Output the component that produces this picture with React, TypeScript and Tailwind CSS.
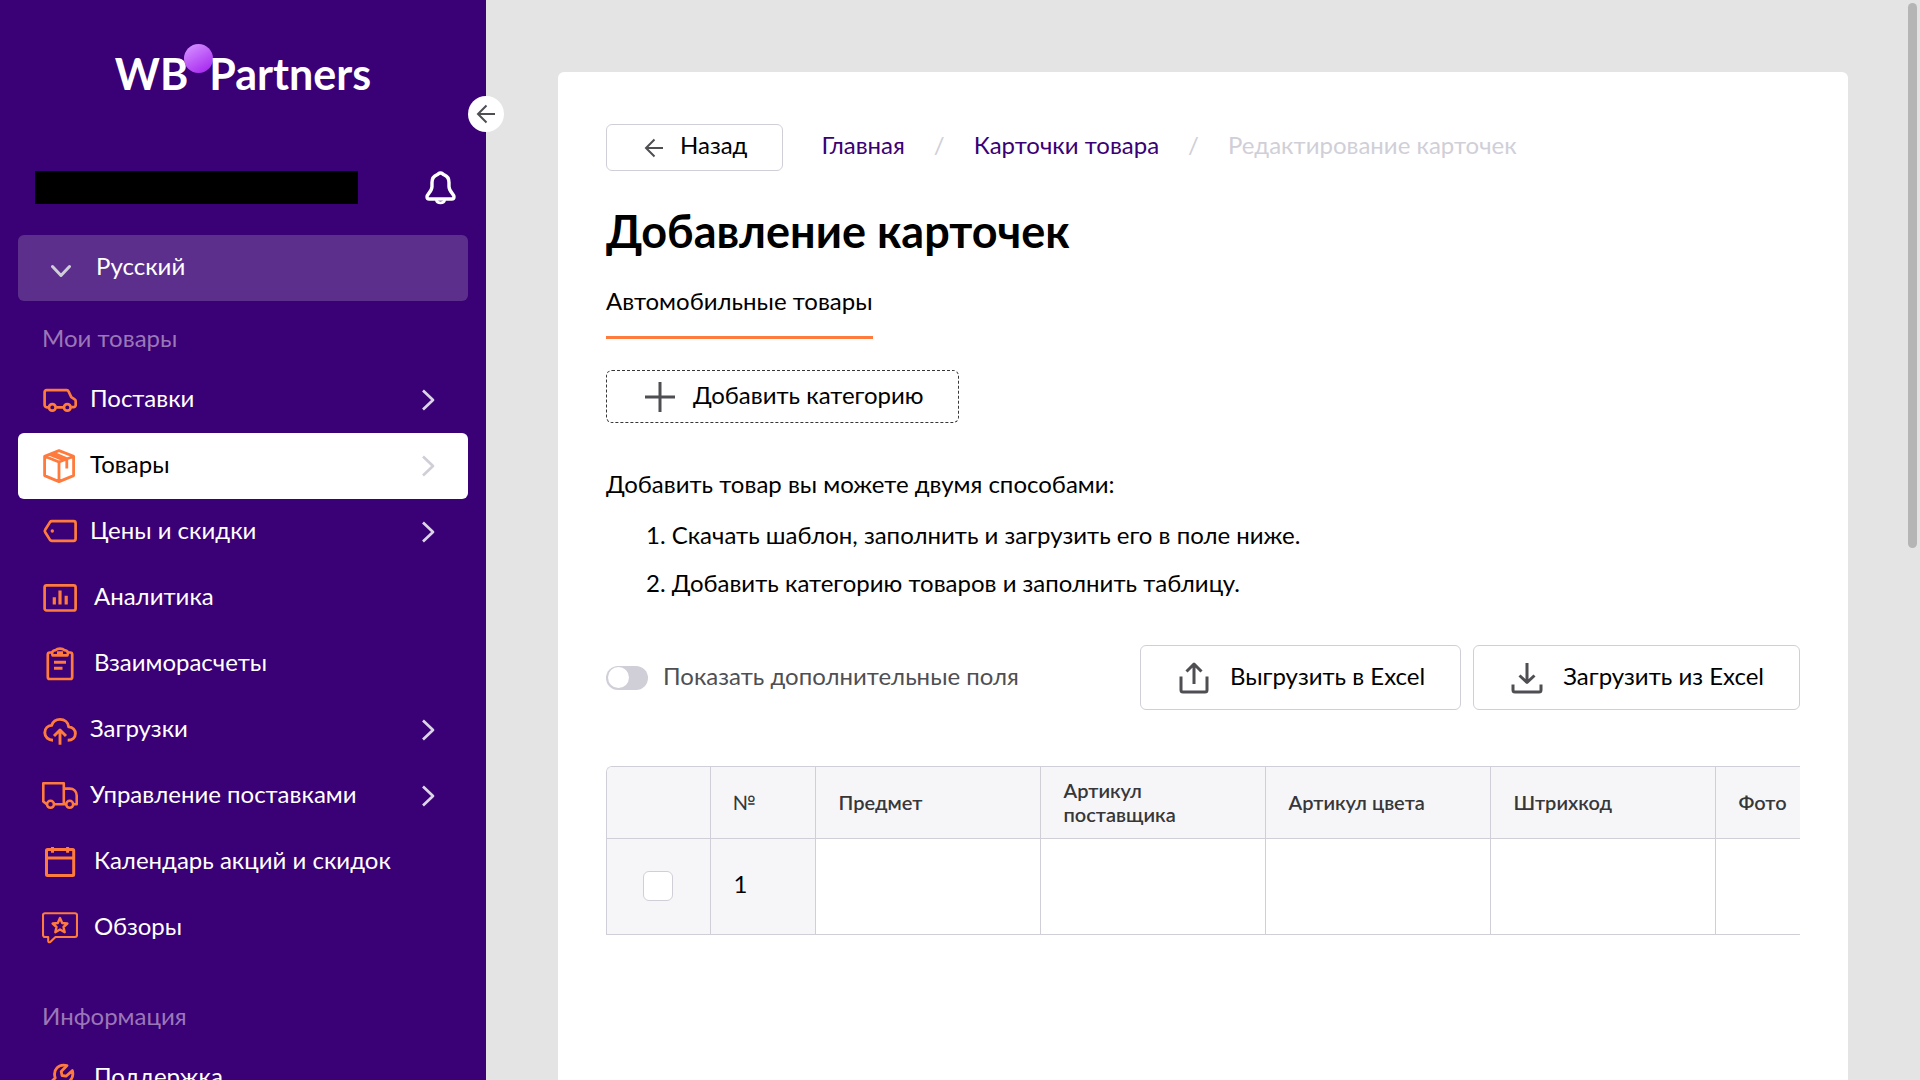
import { useState } from "react";
import type { ReactNode } from "react";

interface IconProps {
  children: ReactNode;
  width?: number;
  size?: number;
  className?: string;
}

function Icon({ children, width = 2, size = 36, className = "text-[#ff7a3d]" }: IconProps) {
  return (
    <svg
      width={size}
      height={size}
      viewBox={`0 0 ${size} ${size}`}
      fill="none"
      stroke="currentColor"
      strokeWidth={width}
      strokeLinejoin="round"
      aria-hidden="true"
      className={`shrink-0 ${className}`}
    >
      {children}
    </svg>
  );
}

const VanIcon = () => (
  <Icon width={2.7}>
    <path d="M6.5 25.3H4.8a2.2 2.2 0 0 1-2.2-2.2V10.2A2 2 0 0 1 4.6 8.2H24.6a2.2 2.2 0 0 1 2 1.3L29.3 15.2L32.7 17.3a2 2 0 0 1 1 1.8V23a2.2 2.2 0 0 1-2.2 2.2H29.2M14.2 25.3H21.5" />
    <circle cx="10.3" cy="25.4" r="3.3" />
    <circle cx="25.3" cy="25.4" r="3.3" />
  </Icon>
);

const BoxIcon = () => (
  <Icon width={2.8}>
    <path d="M17 2.6L31.6 8.2V27.6L17 33.6L2.6 27.6V8.2ZM2.6 8.2L17 14L31.6 8.2M17 14V33.6M7.5 6.4L21.8 12L25 10.8L12 5.2M24.8 11V20.6" />
  </Icon>
);

const TagIcon = () => (
  <Icon width={2.7}>
    <path d="M9.8 7.2H31.6a2 2 0 0 1 2 2V24.8a2 2 0 0 1-2 2H9.8a2.2 2.2 0 0 1-1.8-.9L3.2 18.3a2.2 2.2 0 0 1 0-2.6L8 8.1A2.2 2.2 0 0 1 9.8 7.2Z" />
    <circle cx="10.3" cy="17" r="1.7" fill="currentColor" stroke="none" />
  </Icon>
);

const ChartIcon = () => (
  <Icon width={2.7}>
    <rect x="2.6" y="5.3" width="31" height="25.2" rx="2" />
    <path d="M12.3 17.3V24.6M18 10.5V24.6M24.2 15.8V24.6" strokeWidth="3.2" />
  </Icon>
);

const ClipboardIcon = () => (
  <Icon width={2.7}>
    <path d="M10.5 6.5H7.8a2 2 0 0 0-2 2V31a2 2 0 0 0 2 2H28.2a2 2 0 0 0 2-2V8.5a2 2 0 0 0-2-2H25.5" />
    <path d="M10.6 9.3C9 6 11 4.500 13.500 4.200C15.500 2.200 20.500 2.200 22.500 4.200C25 4.500 27 6 25.400 9.300ZM15 6.600H21" />
    <path d="M12 16.300H24M12 22.300H20.500" strokeWidth="3" />
  </Icon>
);

const CloudIcon = () => (
  <Icon width={2.9}>
    <path d="M11 28.300C6.500 28.300 2.800 25.200 2.800 20.800C2.800 16.500 6 13.800 9.600 13.400C11 9.500 14.200 7.400 18 7.400C22.800 7.400 26.200 10.500 26.700 14.800C30.800 15.300 33.400 18 33.400 21.600C33.400 25.400 30.500 28.300 25.700 28.300M18 32.700V18.600M12 24L18 18L24 24" />
  </Icon>
);

const TruckIcon = () => (
  <Icon width={2.6}>
    <path d="M4.800 26.200L1.300 23.500V5.200H21.800V26.200H12.300M21.800 10.600H27.500C32 10.600 34.700 13.500 34.700 17.500V26.200H31.300M21.800 26.200H23.800" />
    <circle cx="8.500" cy="26.300" r="3.500" />
    <circle cx="27.700" cy="26.300" r="3.500" />
  </Icon>
);

const CalendarIcon = () => (
  <Icon width={3}>
    <rect x="4.500" y="5.500" width="27.200" height="26" rx="1" />
    <path d="M4.500 14H31.700" />
    <path d="M10.500 3V8.800M25.600 3V8.800" />
  </Icon>
);

const ReviewIcon = () => (
  <Icon width={2.1}>
    <path d="M3 3.200H33a2 2 0 0 1 2 2V25a2 2 0 0 1-2 2H13.500L8.500 31.800Q6.500 33 6.200 31V27H3a2 2 0 0 1-2-2V5.200A2 2 0 0 1 3 3.200Z" />
    <path d="M18 8L20.200 13L25.400 13.500L21.500 17L22.700 22.200L18 19.500L13.300 22.200L14.500 17L10.600 13.500L15.800 13Z" strokeWidth="2.400" />
  </Icon>
);

const WrenchIcon = () => (
  <Icon width={2.8}>
    <path d="M7 24L13.200 18C10.500 9.500 17 3.500 25 5.600L19.200 11.400L20 15.500L24 16.200L30.400 10.600C32.500 18.500 26.500 24.800 18.500 23L9.500 33Z" />
  </Icon>
);

const ChevronRight = ({ active }: { active?: boolean }) => (
  <Icon size={24} width={2.7} className={active ? "text-[#d0cfd8]" : "text-[#dcd5e6]"}>
    <path d="M7 2.500L17 12L7 21.500" />
  </Icon>
);

const ArrowLeft = () => (
  <Icon size={20} width={2} className="text-[#4f4f53]">
    <path d="M19 10H2M10.500 1.500L2 10L10.500 18.500" strokeLinejoin="miter" />
  </Icon>
);

interface NavItem {
  label: string;
  icon: ReactNode;
  submenu?: boolean;
  active?: boolean;
}

const goods: NavItem[] = [
  { label: "Поставки", icon: <VanIcon />, submenu: true },
  { label: "Товары", icon: <BoxIcon />, submenu: true, active: true },
  { label: "Цены и скидки", icon: <TagIcon />, submenu: true },
  { label: "Аналитика", icon: <ChartIcon /> },
  { label: "Взаиморасчеты", icon: <ClipboardIcon /> },
  { label: "Загрузки", icon: <CloudIcon />, submenu: true },
  { label: "Управление поставками", icon: <TruckIcon />, submenu: true },
  { label: "Календарь акций и скидок", icon: <CalendarIcon /> },
  { label: "Обзоры", icon: <ReviewIcon /> },
];

const info: NavItem[] = [{ label: "Поддержка", icon: <WrenchIcon /> }];

const columns = ["Предмет", "Артикул поставщика", "Артикул цвета", "Штрихкод", "Фото"];

function NavLink({ item }: { item: NavItem }) {
  return (
    <li>
      <a
        href="#"
        className={`flex h-[66px] items-center rounded-md pr-7 pl-6 ${
          item.submenu ? "gap-3" : "gap-4"
        } ${item.active ? "bg-white text-black" : "text-white"}`}
      >
        {item.icon}
        <span className="grow pb-1 whitespace-nowrap">{item.label}</span>
        {item.submenu && <ChevronRight active={item.active} />}
      </a>
    </li>
  );
}

function NavSection({ title, items }: { title: string; items: NavItem[] }) {
  return (
    <div>
      <h2 className="flex h-[66px] items-center pt-2 pl-6 text-[#9a77b7]">{title}</h2>
      <ul>
        {items.map((item) => (
          <NavLink key={item.label} item={item} />
        ))}
      </ul>
    </div>
  );
}

function Sidebar() {
  return (
    <aside className="relative z-10 w-[486px] shrink-0 bg-[#3a0075]">
      <button
        type="button"
        aria-label="Свернуть меню"
        className="absolute top-24 -right-[18px] flex size-9 items-center justify-center rounded-full bg-white"
      >
        <ArrowLeft />
      </button>

      <div className="flex h-screen flex-col overflow-hidden px-[18px]">
        <div className="flex h-[170px] shrink-0 justify-center pt-11 text-[43px] leading-[60px] font-bold text-white">
          <span>WB</span>
          <svg width="29" height="29" viewBox="0 0 29 29" className="-mx-1" aria-hidden="true">
            <defs>
              <linearGradient id="ball" x1="0.2" y1="0" x2="0.8" y2="1">
                <stop offset="0" stopColor="#d48fff" />
                <stop offset="1" stopColor="#a726f0" />
              </linearGradient>
            </defs>
            <circle cx="14.500" cy="14.500" r="14.500" fill="url(#ball)" />
          </svg>
          <span>Partners</span>
        </div>

        <div className="mb-[30px] flex h-[35px] shrink-0 items-center justify-between pr-2.5 pl-[17px]">
          <div className="h-[33px] w-[323px] bg-black" />
          <button type="button" aria-label="Уведомления">
            <Icon size={35} width={3.4} className="text-white">
              <path d="M17.500 3C15.500 3 15.500 4.200 13.800 4.800C10.500 6 9 9 9 12.500V16.500C9 21.500 4 24 4 26.800Q4 29 6.200 29H28.800Q31 29 31 26.800C31 24 26 21.500 26 16.500V12.500C26 9 24.500 6 21.200 4.800C19.500 4.200 19.500 3 17.500 3Z" />
              <path d="M13.300 30C14 33.800 21 33.800 21.700 30" strokeWidth="2.800" />
            </Icon>
          </button>
        </div>

        <button
          type="button"
          className="flex h-[66px] shrink-0 items-center gap-[25px] rounded-md bg-[#5c2f8d] pl-[33px] text-left text-white"
        >
          <Icon size={20} width={3} className="mt-1.5 text-[#d0cfd8]">
            <path d="M1.500 5.500L10 14.500L18.500 5.500" strokeLinecap="round" />
          </Icon>
          <span className="pb-1">Русский</span>
        </button>

        <nav className="flex flex-col gap-[18px]">
          <NavSection title="Мои товары" items={goods} />
          <NavSection title="Информация" items={info} />
        </nav>
      </div>
    </aside>
  );
}

function Breadcrumbs() {
  return (
    <nav className="flex items-center" aria-label="Навигация">
      <button
        type="button"
        className="mr-[38px] flex h-[47px] items-center gap-4 rounded-md border border-[#d0cfd8] pr-[35px] pl-[37px]"
      >
        <ArrowLeft />
        <span className="pb-1.5">Назад</span>
      </button>
      <ol className="flex items-center gap-[29px] pb-1.5 text-[#3a0075]">
        <li><a href="#">Главная</a></li>
        <li className="text-[#d0cfd8]">/</li>
        <li><a href="#">Карточки товара</a></li>
        <li className="text-[#d0cfd8]">/</li>
        <li className="text-[#d0cfd8]">Редактирование карточек</li>
      </ol>
    </nav>
  );
}

function Toolbar() {
  const [extra, setExtra] = useState(false);

  return (
    <div className="mt-[38px] flex items-center justify-between">
      <label className="flex items-center gap-[15px] text-[#4f4f53]">
        <input
          type="checkbox"
          role="switch"
          checked={extra}
          onChange={(e) => setExtra(e.target.checked)}
          className="flex h-6 w-[42px] appearance-none items-center rounded-full bg-[#d0cfd8] px-0.5 before:size-[21px] before:rounded-full before:bg-white checked:justify-end checked:bg-[#3a0075]"
        />
        <span className="pb-1">Показать дополнительные поля</span>
      </label>
      <div className="flex gap-3">
        <button
          type="button"
          className="flex h-[65px] items-center gap-[18px] rounded-md border border-[#d0cfd8] px-[35px]"
        >
          <Icon size={36} width={3} className="text-[#4f4f53]">
            <path d="M5 16.500V30a2 2 0 0 0 2 2H29a2 2 0 0 0 2-2V16.500M18 24V5M10.500 11.500L18 4L25.500 11.500" />
          </Icon>
          <span className="pb-1">Выгрузить в Excel</span>
        </button>
        <button
          type="button"
          className="flex h-[65px] items-center gap-[18px] rounded-md border border-[#d0cfd8] px-[35px]"
        >
          <Icon size={36} width={3} className="text-[#4f4f53]">
            <path d="M4 24.500V30a2 2 0 0 0 2 2H30a2 2 0 0 0 2-2V24.500M18 3V22.500M10.500 15.500L18 22.500L25.500 15.500" />
          </Icon>
          <span className="pb-1">Загрузить из Excel</span>
        </button>
      </div>
    </div>
  );
}

function ProductTable() {
  return (
    <div className="mt-14 overflow-hidden rounded-tl-md border-y border-l border-[#d0cfd8]">
      <table className="w-[1333px] table-fixed border-collapse">
        <thead>
          <tr className="h-[71px] bg-[#f6f6f9] text-left text-[20px] leading-6 text-[#37373a]">
            <th className="w-[103px] border-r border-b border-[#d0cfd8]" aria-label="Выбор" />
            <th className="w-[105px] border-r border-b border-[#d0cfd8] pl-[22px] font-normal">№</th>
            {columns.map((name) => (
              <th key={name} className="w-[225px] border-r border-b border-[#d0cfd8] px-[23px] font-semibold">
                {name}
              </th>
            ))}
          </tr>
        </thead>
        <tbody>
          <tr className="h-24">
            <td className="border-r border-[#d0cfd8] bg-[#f6f6f9]">
              <input
                type="checkbox"
                aria-label="Выбрать строку 1"
                className="mx-auto block size-[30px] appearance-none rounded-md border border-[#d0cfd8] bg-white checked:bg-[#3a0075]"
              />
            </td>
            <td className="border-r border-[#d0cfd8] bg-[#f6f6f9] pb-1 pl-[23px]">1</td>
            {columns.map((name) => (
              <td key={name} className="border-r border-[#d0cfd8]" />
            ))}
          </tr>
        </tbody>
      </table>
    </div>
  );
}

export default function App() {
  return (
    <div className="relative flex h-screen overflow-hidden bg-[#e4e4e4] font-[Lato,'Noto_Sans',sans-serif] text-[24px] leading-[30px] text-black">
      <Sidebar />

      <main className="min-w-0 grow px-[72px] pt-[72px]">
        <div className="min-h-screen rounded-md bg-white px-12 pt-[52px]">
          <Breadcrumbs />
          <h1 className="mt-8 text-[45px] leading-[56px] font-bold">Добавление карточек</h1>
          <div role="tablist" className="mt-[27px] flex">
            <button type="button" role="tab" aria-selected="true" className="border-b-3 border-[#ff7a3d] pb-5">
              Автомобильные товары
            </button>
          </div>
          <button
            type="button"
            className="mt-[31px] flex h-[53px] items-center gap-[17px] rounded-md border border-dashed border-[#37373a] pr-[34px] pl-[37px]"
          >
            <Icon size={32} width={3} className="text-[#4f4f53]">
              <path d="M16 1V31M1 16H31" />
            </Icon>
            <span className="pb-1">Добавить категорию</span>
          </button>
          <p className="mt-[46px]">Добавить товар вы можете двумя способами:</p>
          <ol className="mt-3 list-inside list-decimal pl-10 leading-[48px]">
            <li>Скачать шаблон, заполнить и загрузить его в поле ниже.</li>
            <li>Добавить категорию товаров и заполнить таблицу.</li>
          </ol>
          <Toolbar />
          <ProductTable />
        </div>
      </main>

      <div className="absolute top-[3px] right-[3px] h-[545px] w-[9px] rounded-full bg-[#b5b5b5]" />
    </div>
  );
}
